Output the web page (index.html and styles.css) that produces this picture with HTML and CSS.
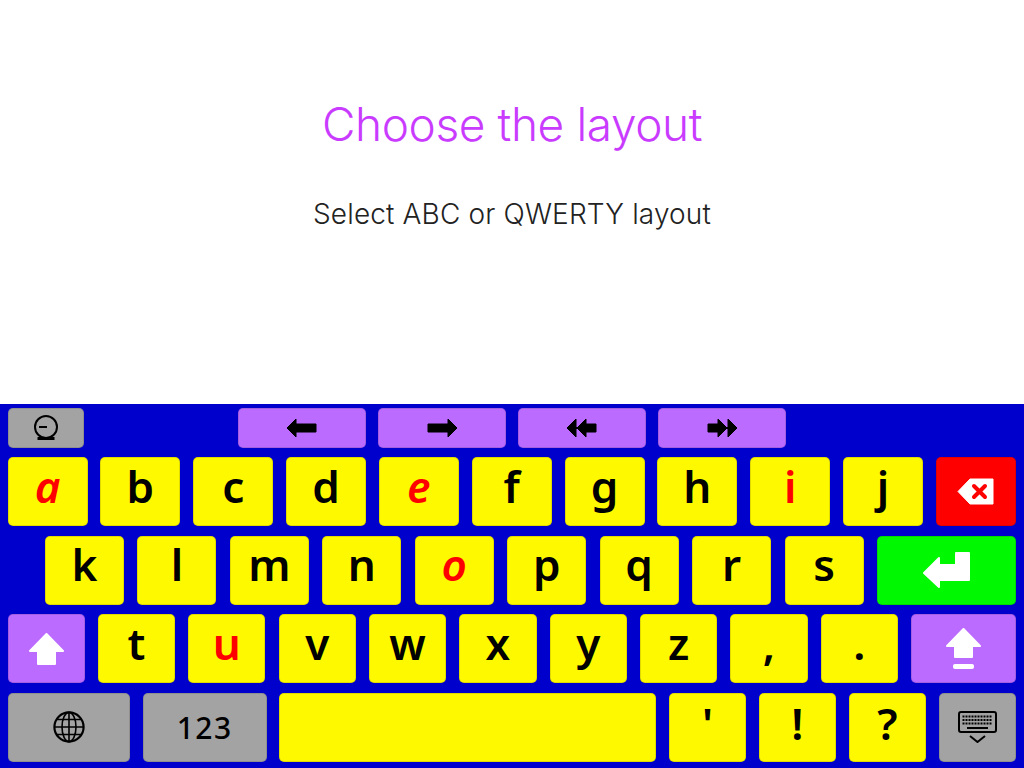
FILE: index.html
```html
<!DOCTYPE html>
<html lang="en">
<head>
    <meta charset="UTF-8">
    <meta name="viewport" content="width=device-width, initial-scale=1.0">
    <title>Choose the layout</title>
    <link rel="stylesheet" href="styles.css">
</head>
<body>
    <div class="intro">
        <h1>Choose the layout</h1>
        <p>Select ABC or QWERTY layout</p>
    </div>

    <div class="keyboard">
        <div class="row row-tools">
            <div class="key grey key-dismiss">
                <svg class="icon-dismiss" viewBox="0 0 26 26"><circle cx="13" cy="12" r="11" fill="none" stroke="#000" stroke-width="2"/><path d="M6 12h8" stroke="#000" stroke-width="2"/><path d="M4.5 22h17v3h-17z"/></svg>
            </div>
            <div class="key purple key-nav">
                <svg class="icon-nav" viewBox="0 0 31 20"><path d="M0 10 9 1v5h20v8H9v5z" stroke="#000" stroke-linejoin="round"/></svg>
            </div>
            <div class="key purple key-nav">
                <svg class="icon-nav" viewBox="0 0 31 20"><path d="M30 10 21 19v-5H1V6h20V1z" stroke="#000" stroke-linejoin="round"/></svg>
            </div>
            <div class="key purple key-nav">
                <svg class="icon-nav" viewBox="0 0 31 20"><path d="M0 10 9 1v8l1 1 9-9v5h10v8H19v5l-9-9-1 1v8z" stroke="#000" stroke-linejoin="round"/></svg>
            </div>
            <div class="key purple key-nav">
                <svg class="icon-nav" viewBox="0 0 31 20"><path d="M30 10 21 19v-8l-1-1-9 9v-5H1V6h10V1l9 9 1-1V1z" stroke="#000" stroke-linejoin="round"/></svg>
            </div>
        </div>

        <div class="row">
            <div class="key letter vowel slant w80">a</div>
            <div class="key letter w80">b</div>
            <div class="key letter w80">c</div>
            <div class="key letter w80">d</div>
            <div class="key letter vowel slant w80">e</div>
            <div class="key letter w80">f</div>
            <div class="key letter w80">g</div>
            <div class="key letter w80">h</div>
            <div class="key letter vowel w80">i</div>
            <div class="key letter w80">j</div>
            <div class="key red w80">
                <svg class="icon-back" viewBox="0 0 37 27"><path d="M1 13.5 13 1h23v25H13z" fill="#fff" stroke="#fff" stroke-linejoin="round"/><path d="m17 8 11 11M28 8 17 19" stroke="#f00" stroke-width="4" stroke-linecap="round"/></svg>
            </div>
        </div>

        <div class="row row-indent">
            <div class="key letter w79">k</div>
            <div class="key letter w79">l</div>
            <div class="key letter w79">m</div>
            <div class="key letter w79">n</div>
            <div class="key letter vowel slant w79">o</div>
            <div class="key letter w79">p</div>
            <div class="key letter w79">q</div>
            <div class="key letter w79">r</div>
            <div class="key letter w79">s</div>
            <div class="key green key-enter">
                <svg class="icon-enter" viewBox="0 0 47 36"><path d="M1 21 16 6v7h17V1h13v27H16v7z" fill="#fff" stroke="#fff" stroke-width="2" stroke-linejoin="round"/></svg>
            </div>
        </div>

        <div class="row">
            <div class="key purple w77">
                <svg class="icon-shift" viewBox="0 0 35 32"><path d="M17.5 1 34 18H26V31H9V18H1z" fill="#fff" stroke="#fff" stroke-width="2" stroke-linejoin="round"/></svg>
            </div>
            <div class="key letter w77">t</div>
            <div class="key letter vowel w77">u</div>
            <div class="key letter w77">v</div>
            <div class="key letter w77">w</div>
            <div class="key letter w77">x</div>
            <div class="key letter w77">y</div>
            <div class="key letter w77">z</div>
            <div class="key letter w77">,</div>
            <div class="key letter w77">.</div>
            <div class="key purple key-shift-lock">
                <svg class="icon-lock" viewBox="0 0 35 42"><path d="M17.5 1 34 18H26V29H9V18H1z" fill="#fff" stroke="#fff" stroke-width="2" stroke-linejoin="round"/><rect x="7" y="36" width="21" height="5" rx="2" fill="#fff"/></svg>
            </div>
        </div>

        <div class="row">
            <div class="key grey key-globe">
                <svg class="icon-globe" viewBox="0 0 32 32" fill="none" stroke="#000" stroke-width="1.6"><circle cx="16" cy="16" r="14.6" stroke-width="2.2"/><ellipse cx="16" cy="16" rx="7" ry="14.6"/><path d="M16 1.4v29.2M1.4 16h29.2M4 8.5h24M4 23.5h24"/></svg>
            </div>
            <div class="key grey key-num">123</div>
            <div class="key letter key-space"></div>
            <div class="key letter punct w77">'</div>
            <div class="key letter punct w77">!</div>
            <div class="key letter punct w77">?</div>
            <div class="key grey w77">
                <svg class="icon-hide" viewBox="0 0 39 32"><rect x="1" y="1" width="37" height="20" rx="2" fill="none" stroke="#000" stroke-width="2"/><path d="M4.5 5.5h30M4.5 9h30M4.5 12.500h30" stroke="#000" stroke-width="2" stroke-dasharray="2 1"/><path d="M9 17h21" stroke="#000" stroke-width="2"/><path d="m12 25 7.500 6 7.500-6" fill="none" stroke="#000" stroke-width="2"/></svg>
            </div>
        </div>
    </div>
</body>
</html>
```

FILE: styles.css
```css
body { margin: 0; width: 1024px; height: 768px; overflow: hidden; background: white; display: flex; flex-direction: column; font-family: "Inter", "Liberation Sans", sans-serif; }

.intro { height: 404px; box-sizing: border-box; padding-top: 94px; text-align: center; }
h1 { margin: 0; font-size: 46px; line-height: 60px; font-weight: 300; letter-spacing: -0.4px; color: #c93bff; }
p { margin: 40px 0 0; font-size: 28px; line-height: 40px; font-weight: 300; letter-spacing: 0.15px; color: #222; }

.keyboard { height: 364px; box-sizing: border-box; padding: 3.500px 8px 0 7.5px; background: #0000cc; display: flex; flex-direction: column; gap: 9.500px; }
.row { display: flex; justify-content: space-between; height: 69px; }
.row-tools { height: 40px; justify-content: flex-start; gap: 12px; }
.row-indent { padding-left: 37.5px; }

.key { box-sizing: border-box; border: 1px solid rgba(0,0,0,0.12); border-radius: 5px; display: flex; align-items: center; justify-content: center; }
.letter { background: #fff900; color: #000; font-family: "Noto Sans", sans-serif; font-size: 44px; font-weight: 600; line-height: 69px; padding-bottom: 11px; }
.punct { padding-bottom: 8px; }
.vowel { color: #f00; }
.slant { font-style: italic; }
.grey { background: #a3a3a3; }
.purple { background: #bb6bff; }
.red { background: #f00; }
.green { background: #00f900; }

.w80 { width: 80px; }
.w79 { width: 79px; }
.w77 { width: 77.300px; }

.key-dismiss { width: 76px; margin-right: 142.500px; }
.key-nav { width: 128px; }
.key-enter { width: 139px; }
.key-shift-lock { width: 105px; }
.key-globe { width: 122.500px; }
.key-num { width: 124px; font-family: "Noto Sans", sans-serif; font-size: 30px; font-weight: 500; letter-spacing: 1.5px; color: #000; }
.key-space { width: 377px; }

.icon-dismiss { width: 26px; height: 26px; }
.icon-nav { width: 31px; height: 20px; }
.icon-back { width: 37px; height: 27px; }
.icon-enter { width: 47px; height: 36px; }
.icon-shift { width: 35px; height: 32px; }
.icon-lock { width: 35px; height: 42px; }
.icon-globe { width: 32px; height: 32px; }
.icon-hide { width: 39px; height: 32px; }
```
